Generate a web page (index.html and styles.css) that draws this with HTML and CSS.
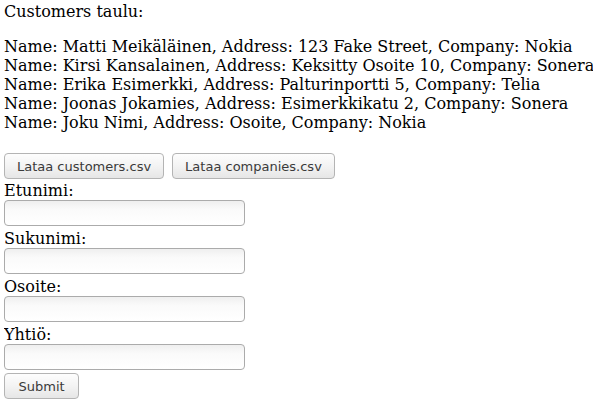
FILE: index.html
```html
<!DOCTYPE html>
<html lang="fi">
<head>
<meta charset="utf-8">
<title>Customers</title>
<link rel="stylesheet" href="styles.css">
</head>
<body>
<div class="title">Customers taulu:</div>
<p class="list">Name: Matti Meikäläinen, Address: 123 Fake Street, Company: Nokia<br>Name: Kirsi Kansalainen, Address: Keksitty Osoite 10, Company: Sonera<br>Name: Erika Esimerkki, Address: Palturinportti 5, Company: Telia<br>Name: Joonas Jokamies, Address: Esimerkkikatu 2, Company: Sonera<br>Name: Joku Nimi, Address: Osoite, Company: Nokia</p>
<div class="actions">
<button class="btn" type="button">Lataa customers.csv</button>
<button class="btn" type="button">Lataa companies.csv</button>
</div>
<form class="form">
<label class="label" for="etunimi">Etunimi:</label>
<input class="field" id="etunimi" type="text">
<label class="label" for="sukunimi">Sukunimi:</label>
<input class="field" id="sukunimi" type="text">
<label class="label" for="osoite">Osoite:</label>
<input class="field" id="osoite" type="text">
<label class="label" for="yhtio">Yhtiö:</label>
<input class="field" id="yhtio" type="text">
<input class="btn submit" type="submit" value="Submit">
</form>
</body>
</html>
```
FILE: styles.css
```css
html, body {
  background: #ffffff;
}
body {
  margin: 2px 4px;
  font-family: "DejaVu Serif", serif;
  font-size: 16px;
  line-height: 19px;
  color: #000000;
}
.title {
  white-space: nowrap;
}
.list {
  margin: 16px 0 21px;
  white-space: nowrap;
}
.actions {
  display: flex;
  gap: 8px;
}
.btn {
  box-sizing: border-box;
  height: 26px;
  padding: 0 12px;
  border: 1px solid #b4b4b4;
  border-radius: 4px;
  background: linear-gradient(#fdfdfd, #f3f3f3 50%, #e6e6e6);
  font-family: "DejaVu Sans", sans-serif;
  font-size: 13px;
  color: #3a3a3a;
  margin: 0;
}
.form {
  display: flex;
  flex-direction: column;
  align-items: flex-start;
  margin-top: 2px;
}
.label {
  display: block;
  height: 19px;
}
.field {
  box-sizing: border-box;
  width: 241px;
  height: 26px;
  margin: 0 0 3px;
  padding: 0 4px;
  border: 1px solid #ababab;
  border-radius: 4px;
  background: linear-gradient(#efefef, #fafafa 35%, #ffffff);
  font-family: "DejaVu Sans", sans-serif;
  font-size: 13px;
}
.submit {
  width: auto;
  padding: 0 13.5px;
}
```
